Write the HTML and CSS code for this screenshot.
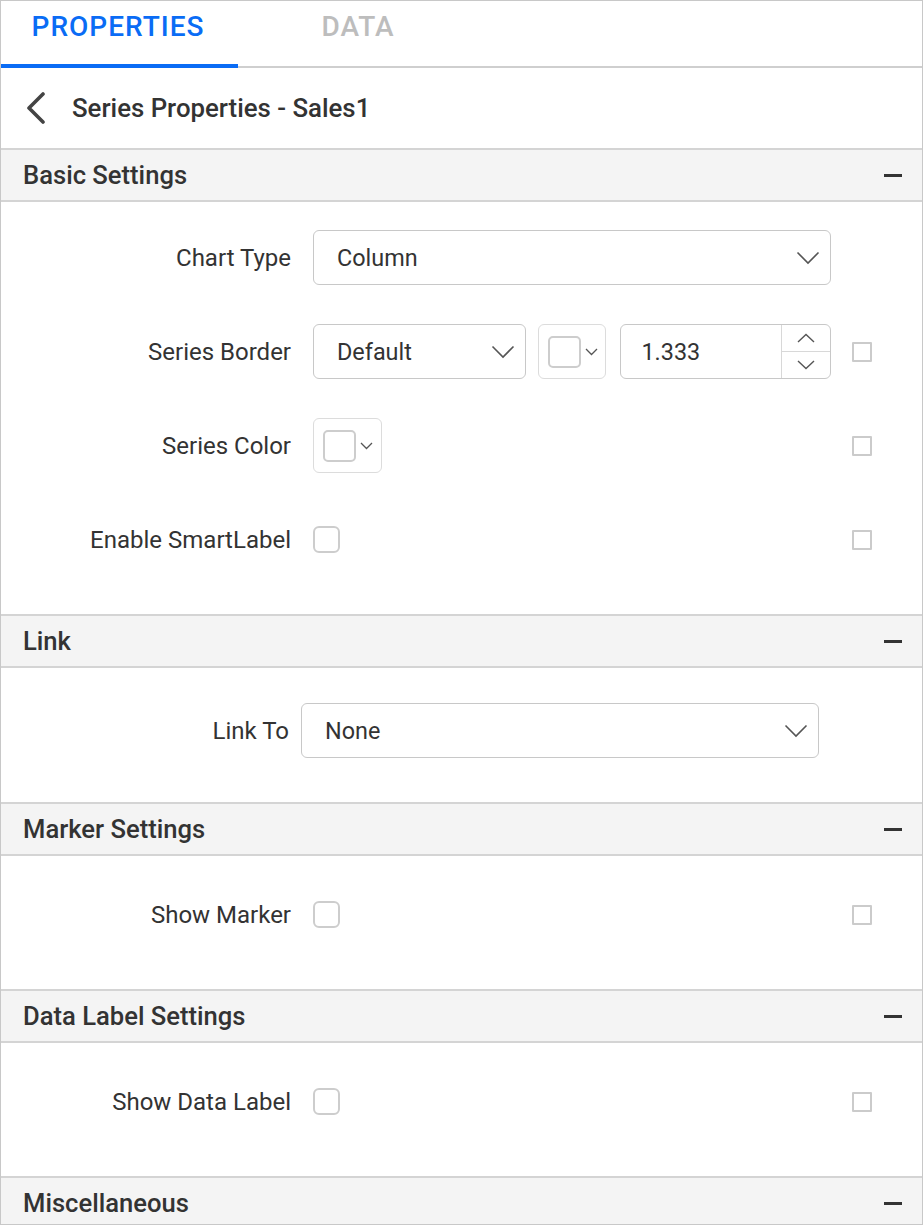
FILE: index.html
```html
<!DOCTYPE html>
<html>
<head>
<meta charset="utf-8">
<link rel="stylesheet" href="styles.css">
</head>
<body>
<div class="panel">
  <div class="tabs">
    <div class="tab active">PROPERTIES</div>
    <div class="tab">DATA</div>
  </div>
  <div class="title-row">
    <svg class="back" width="24" height="32" viewBox="0 0 24 32"><path d="M19 2 L5 16 L19 30" fill="none" stroke="#444" stroke-width="3.6" stroke-linecap="round" stroke-linejoin="round"/></svg>
    <span class="title">Series Properties - Sales1</span>
  </div>

  <section class="group">
    <div class="group-head"><span>Basic Settings</span><span class="minus"></span></div>
    <div class="group-body basic">
      <div class="row">
        <div class="label">Chart Type</div>
        <div class="ctrl">
          <div class="dropdown wide"><span>Column</span>
            <svg class="chev" width="24" height="14" viewBox="0 0 24 14"><path d="M1.5 1.5 L12 12 L22.5 1.5" fill="none" stroke="#555" stroke-width="1.6"/></svg>
          </div>
        </div>
      </div>
      <div class="row">
        <div class="label">Series Border</div>
        <div class="ctrl">
          <div class="dropdown small"><span>Default</span>
            <svg class="chev" width="24" height="14" viewBox="0 0 24 14"><path d="M1.5 1.5 L12 12 L22.5 1.5" fill="none" stroke="#555" stroke-width="1.6"/></svg>
          </div>
          <div class="picker"><span class="swatch"></span>
            <svg class="mini-chev" width="13" height="8" viewBox="0 0 13 8"><path d="M1 1 L6.5 6.5 L12 1" fill="none" stroke="#555" stroke-width="1.3"/></svg>
          </div>
          <div class="numeric"><span class="num-val">1.333</span>
            <div class="spin">
              <div class="spin-btn"><svg width="18" height="10" viewBox="0 0 18 10"><path d="M1 9 L9 1.5 L17 9" fill="none" stroke="#555" stroke-width="1.4"/></svg></div>
              <div class="spin-btn"><svg width="18" height="10" viewBox="0 0 18 10"><path d="M1 1 L9 8.5 L17 1" fill="none" stroke="#555" stroke-width="1.4"/></svg></div>
            </div>
          </div>
        </div>
        <span class="side-box"></span>
      </div>
      <div class="row">
        <div class="label">Series Color</div>
        <div class="ctrl">
          <div class="picker"><span class="swatch"></span>
            <svg class="mini-chev" width="13" height="8" viewBox="0 0 13 8"><path d="M1 1 L6.5 6.5 L12 1" fill="none" stroke="#555" stroke-width="1.3"/></svg>
          </div>
        </div>
        <span class="side-box"></span>
      </div>
      <div class="row">
        <div class="label">Enable SmartLabel</div>
        <div class="ctrl"><span class="check"></span></div>
        <span class="side-box"></span>
      </div>
    </div>
  </section>

  <section class="group">
    <div class="group-head"><span>Link</span><span class="minus"></span></div>
    <div class="group-body link">
      <div class="row link-row">
        <div class="label">Link To</div>
        <div class="ctrl">
          <div class="dropdown wide"><span>None</span>
            <svg class="chev" width="24" height="14" viewBox="0 0 24 14"><path d="M1.5 1.5 L12 12 L22.5 1.5" fill="none" stroke="#555" stroke-width="1.6"/></svg>
          </div>
        </div>
      </div>
    </div>
  </section>

  <section class="group">
    <div class="group-head"><span>Marker Settings</span><span class="minus"></span></div>
    <div class="group-body single">
      <div class="row">
        <div class="label">Show Marker</div>
        <div class="ctrl"><span class="check"></span></div>
        <span class="side-box"></span>
      </div>
    </div>
  </section>

  <section class="group">
    <div class="group-head"><span>Data Label Settings</span><span class="minus"></span></div>
    <div class="group-body single">
      <div class="row">
        <div class="label">Show Data Label</div>
        <div class="ctrl"><span class="check"></span></div>
        <span class="side-box"></span>
      </div>
    </div>
  </section>

  <section class="group">
    <div class="group-head"><span>Miscellaneous</span><span class="minus"></span></div>
  </section>
</div>
</body>
</html>
```

FILE: styles.css
```css
* { box-sizing: border-box; }
html, body { margin: 0; padding: 0; background: #fff; }
body { font-family: Roboto, "Liberation Sans", sans-serif; color: #333; }

.panel {
  width: 923px;
  height: 1225px;
  border: 1px solid #c8c8c8;
  overflow: hidden;
  background: #fff;
}

.tabs {
  display: flex;
  height: 67px;
  border-bottom: 2px solid #cfcfcf;
}
.tab {
  width: 237px;
  text-align: center;
  font-size: 28px;
  font-weight: 500;
  letter-spacing: 1px;
  line-height: 52px;
  color: #bdbdbd;
  position: relative;
  padding-left: 3px;
}
.tab.active {
  color: #0a6cf5;
  padding-left: 0;
  padding-right: 3px;
}
.tab.active::after {
  content: "";
  position: absolute;
  left: 0; right: 0; bottom: -2px;
  height: 4px;
  background: #0a6cf5;
}

.title-row {
  height: 80px;
  display: flex;
  align-items: center;
  padding-left: 23px;
}
.back { flex: none; }
.title {
  margin-left: 24px;
  font-size: 25.8px;
  font-weight: 500;
  color: #333;
}

.group-head {
  height: 54px;
  border-top: 2px solid #d4d4d4;
  border-bottom: 2px solid #d4d4d4;
  background: #f4f4f4;
  display: flex;
  align-items: center;
  justify-content: space-between;
  padding: 0 20px 0 22px;
  font-size: 25.6px;
  font-weight: 500;
  color: #333;
}
.minus {
  width: 18px;
  height: 3px;
  background: #333;
}

.group-body.basic { height: 412px; padding-top: 28px; }
.group-body.link { height: 134px; padding-top: 35px; }
.group-body.single { height: 133px; padding-top: 31px; }

.row {
  display: flex;
  align-items: center;
  height: 55px;
  margin-bottom: 39px;
}
.label {
  width: 290px;
  flex: none;
  text-align: right;
  font-size: 24px;
  color: #333;
}
.ctrl {
  width: 518px;
  flex: none;
  margin-left: 22px;
  display: flex;
  align-items: center;
  height: 55px;
}
.link-row .label { width: 288px; }
.link-row .ctrl { margin-left: 12px; }

.side-box {
  flex: none;
  margin-left: 21px;
  width: 20px;
  height: 20px;
  border: 2px solid #cbcbcb;
  border-radius: 1px;
}

.dropdown {
  height: 55px;
  border: 1.5px solid #c8c8c8;
  border-radius: 6px;
  display: flex;
  align-items: center;
  justify-content: space-between;
  padding: 0 10px 0 23px;
  font-size: 23.4px;
  color: #333;
}
.dropdown.wide { width: 518px; }
.dropdown.small { width: 213px; }

.picker {
  width: 69px;
  height: 55px;
  border: 1.5px solid #dcdcdc;
  border-radius: 6px;
  display: flex;
  align-items: center;
  padding-left: 9px;
  margin-left: 12px;
}
.ctrl > .picker:first-child { margin-left: 0; }
.swatch {
  width: 33px;
  height: 32px;
  border: 2px solid #cdcdcd;
  border-radius: 5px;
}
.mini-chev { margin-left: 4px; }

.numeric {
  width: 211px;
  height: 55px;
  margin-left: 14px;
  border: 1.5px solid #c8c8c8;
  border-radius: 6px;
  display: flex;
  align-items: stretch;
}
.num-val {
  flex: 1;
  display: flex;
  align-items: center;
  padding-left: 20px;
  font-size: 23.4px;
  color: #333;
}
.spin {
  width: 49px;
  border-left: 1.5px solid #d8d8d8;
  display: flex;
  flex-direction: column;
}
.spin-btn {
  flex: 1;
  display: flex;
  align-items: center;
  justify-content: center;
}
.spin-btn + .spin-btn { border-top: 1.5px solid #d8d8d8; }

.check {
  width: 27px;
  height: 27px;
  border: 2px solid #cdcdcd;
  border-radius: 6px;
}
```
